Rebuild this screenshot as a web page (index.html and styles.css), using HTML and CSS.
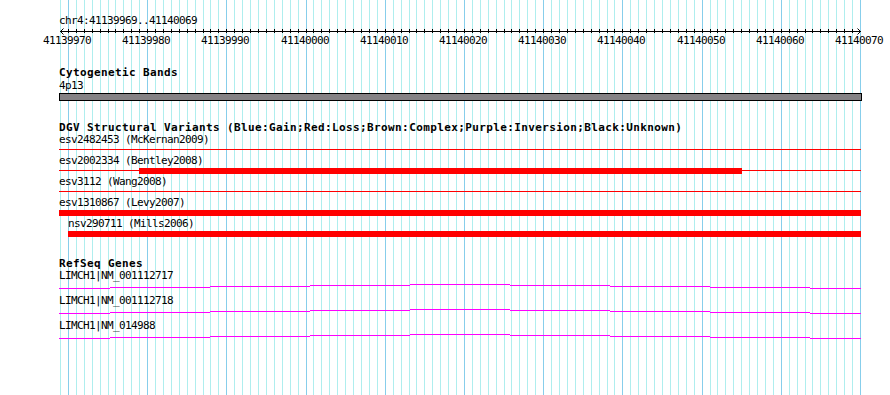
FILE: index.html
```html
<!DOCTYPE html>
<html lang="en">
<head>
<meta charset="utf-8">
<title>chr4:41139969..41140069</title>
<link rel="stylesheet" href="styles.css">
</head>
<body>
<svg class="defs" width="0" height="0" aria-hidden="true">
  <symbol id="intron" viewBox="59 0 802 13">
    <rect x="59" y="6" width="51" height="1"/>
    <rect x="110" y="5" width="100" height="1"/>
    <rect x="210" y="4" width="100" height="1"/>
    <rect x="310" y="3" width="100" height="1"/>
    <rect x="410" y="2" width="100" height="1"/>
    <rect x="510" y="3" width="100" height="1"/>
    <rect x="610" y="4" width="100" height="1"/>
    <rect x="710" y="5" width="100" height="1"/>
    <rect x="810" y="6" width="51" height="1"/>
  </symbol>
</svg>
<div class="browser">
  <svg class="grid" width="890" height="395" viewBox="0 0 890 395"></svg>
  <div class="tracks">
    <div class="loc">chr4:41139969..41140069</div>
    <svg class="ruler" width="831" height="20" viewBox="59 0 831 20">
      <rect class="axis" x="60" y="4" width="801" height="1"/>
      <polyline class="arrow" points="63.5,1.5 60.5,4.5 63.5,7.5"/>
      <polyline class="arrow" points="857.5,1.5 860.5,4.5 857.5,7.5"/>
      <g class="ticks"></g>
      <g class="tick-labels">
        <text x="67" y="17">41139970</text>
        <text x="146" y="17">41139980</text>
        <text x="225" y="17">41139990</text>
        <text x="305" y="17">41140000</text>
        <text x="384" y="17">41140010</text>
        <text x="463" y="17">41140020</text>
        <text x="542" y="17">41140030</text>
        <text x="621" y="17">41140040</text>
        <text x="701" y="17">41140050</text>
        <text x="780" y="17">41140060</text>
        <text x="859" y="17">41140070</text>
      </g>
    </svg>

    <section class="track cyto">
      <h2 class="track-title">Cytogenetic Bands</h2>
      <div class="label">4p13</div>
      <div class="band"></div>
    </section>

    <section class="track dgv">
      <h2 class="track-title">DGV Structural Variants (Blue:Gain;Red:Loss;Brown:Complex;Purple:Inversion;Black:Unknown)</h2>
      <div class="variant">
        <div class="label">esv2482453 (McKernan2009)</div>
        <div class="feat"><span class="thin" style="width:802px"></span></div>
      </div>
      <div class="variant">
        <div class="label">esv2002334 (Bentley2008)</div>
        <div class="feat"><span class="thin" style="width:80px"></span><span class="thick" style="width:603px"></span><span class="thin" style="width:119px"></span></div>
      </div>
      <div class="variant">
        <div class="label">esv3112 (Wang2008)</div>
        <div class="feat"><span class="thin" style="width:802px"></span></div>
      </div>
      <div class="variant">
        <div class="label">esv1310867 (Levy2007)</div>
        <div class="feat"><span class="thick" style="width:802px"></span></div>
      </div>
      <div class="variant" style="margin-left:9px">
        <div class="label">nsv290711 (Mills2006)</div>
        <div class="feat"><span class="thick" style="width:793px"></span></div>
      </div>
    </section>

    <section class="track refseq">
      <h2 class="track-title">RefSeq Genes</h2>
      <div class="gene">
        <div class="label">LIMCH1|NM_001112717</div>
        <svg class="transcript" width="802" height="13"><use href="#intron"/></svg>
      </div>
      <div class="gene">
        <div class="label">LIMCH1|NM_001112718</div>
        <svg class="transcript" width="802" height="13"><use href="#intron"/></svg>
      </div>
      <div class="gene">
        <div class="label">LIMCH1|NM_014988</div>
        <svg class="transcript" width="802" height="13"><use href="#intron"/></svg>
      </div>
    </section>
  </div>
</div>
<script src="grid.js"></script>
</body>
</html>
```

FILE: styles.css
```css
html, body {
  margin: 0;
  padding: 0;
  background: #ffffff;
}

body {
  font-family: "DejaVu Sans Mono", monospace;
  color: #000000;
}

.defs {
  position: absolute;
  width: 0;
  height: 0;
  overflow: hidden;
}

.browser {
  position: relative;
  width: 890px;
  height: 395px;
  overflow: hidden;
}

.grid {
  position: absolute;
  left: 0;
  top: 0;
  display: block;
}

.grid .minor { fill: #afeeee; }
.grid .major { fill: #87ceeb; }

.tracks {
  position: relative;
  padding: 15px 0 0 59px;
}

.loc,
.label {
  font-size: 11px;
  letter-spacing: -0.62px;
  line-height: 12px;
  height: 12px;
  white-space: nowrap;
}

.ruler {
  display: block;
  overflow: visible;
}

.ruler .axis,
.ruler .ticks rect { fill: #000000; }

.ruler .arrow {
  fill: none;
  stroke: #000000;
  stroke-width: 1;
}

.ruler text {
  font-family: "DejaVu Sans Mono", monospace;
  font-size: 11px;
  letter-spacing: -0.62px;
  text-anchor: middle;
  fill: #000000;
}

.track-title {
  margin: 0;
  font-size: 11px;
  font-weight: bold;
  letter-spacing: 0.38px;
  line-height: 12px;
  height: 12px;
  white-space: nowrap;
}

.cyto { margin-top: 20px; }

.cyto .label { margin-top: 1px; }

.band {
  margin-top: 1px;
  width: 801px;
  height: 6px;
  border: 1px solid #000000;
  background: #858285;
}

.dgv { margin-top: 21px; }

.variant { height: 21px; }

.feat {
  display: flex;
  align-items: flex-start;
  height: 9px;
}

.feat .thin {
  display: block;
  height: 1px;
  margin-top: 3px;
  background: #ff0000;
}

.feat .thick {
  display: block;
  height: 6px;
  margin-top: 1px;
  background: #ff0000;
}

.refseq { margin-top: 19px; }

.gene { height: 25px; }

.transcript {
  display: block;
  fill: #ff00ff;
}
```

FILE: grid.js
```js
(function () {
  var NS = 'http://www.w3.org/2000/svg';
  var start = 41139969;
  var bases = 101;
  var pxPerBase = 800 / bases;
  var grid = document.querySelector('.grid');
  var ticks = document.querySelector('.ruler .ticks');
  for (var i = 0; i <= bases; i++) {
    var x = Math.round(60 + i * pxPerBase);
    var line = document.createElementNS(NS, 'rect');
    line.setAttribute('x', x);
    line.setAttribute('y', 0);
    line.setAttribute('width', 1);
    line.setAttribute('height', 395);
    line.setAttribute('class', (start + i) % 10 === 0 ? 'major' : 'minor');
    grid.appendChild(line);
    if (i > 0 && i < bases) {
      var t = document.createElementNS(NS, 'rect');
      t.setAttribute('x', x);
      t.setAttribute('y', 2);
      t.setAttribute('width', 1);
      t.setAttribute('height', 4);
      ticks.appendChild(t);
    }
  }
})();
```
